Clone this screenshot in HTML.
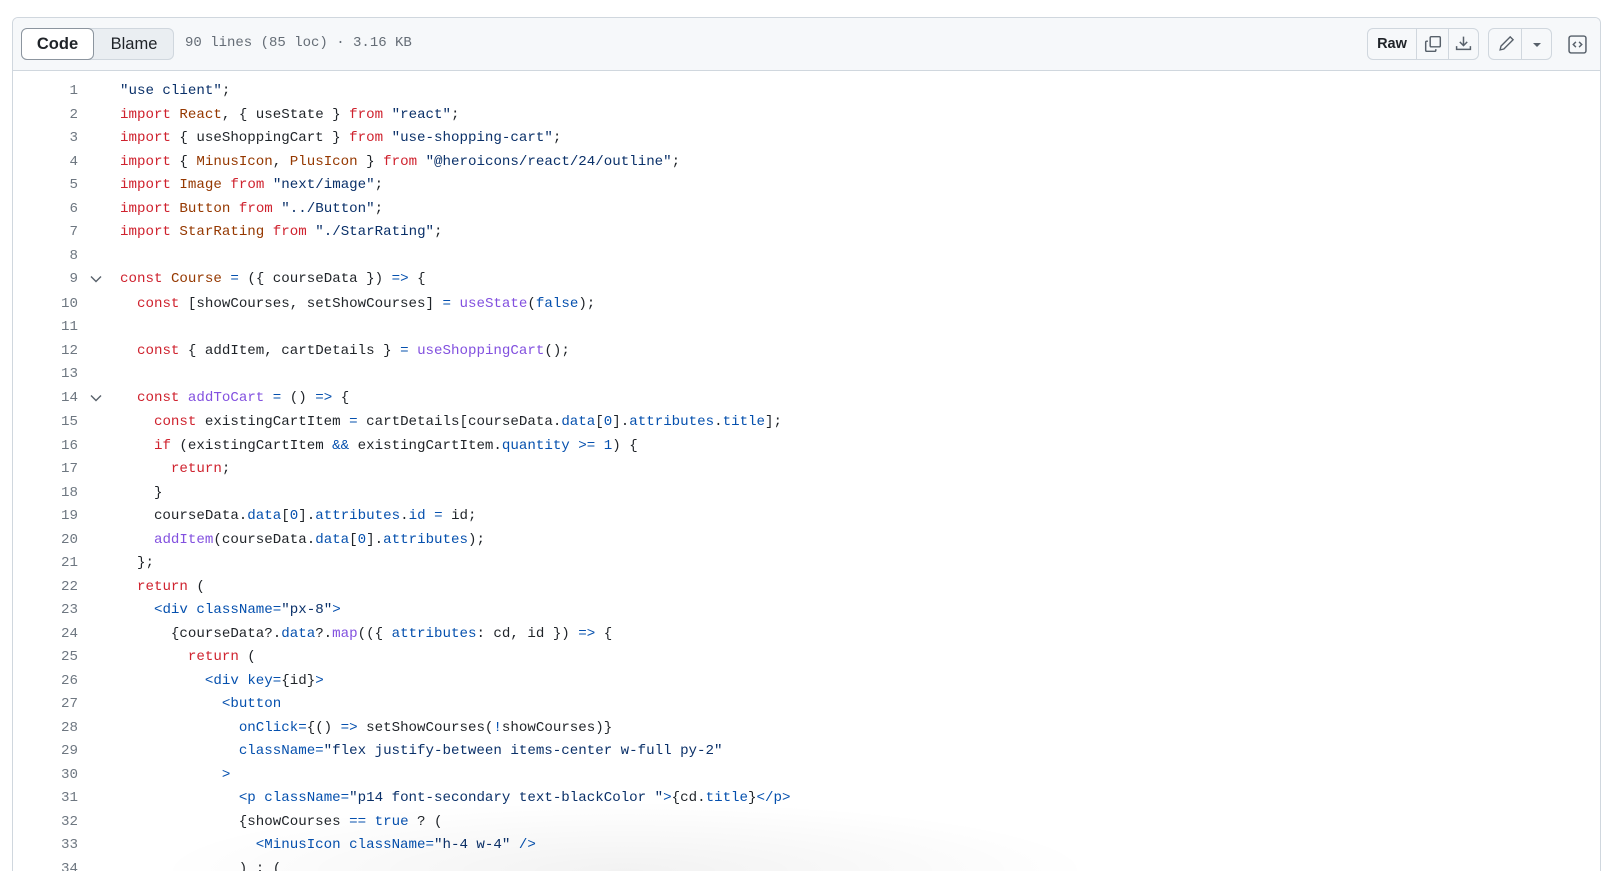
<!DOCTYPE html>
<html><head><meta charset="utf-8"><style>
html,body{margin:0;background:#fff;width:1619px;height:871px;overflow:hidden;font-family:"Liberation Sans",sans-serif;position:relative}
.box{position:absolute;left:12px;top:17px;width:1589px;height:854px;border:1px solid #d0d7de;border-bottom:none;border-radius:6px 6px 0 0;overflow:hidden;box-sizing:border-box}
.hdr{height:53px;background:#f6f8fa;border-bottom:1px solid #d0d7de;position:relative;box-sizing:border-box}
.seg{position:absolute;left:8px;top:10px;width:153px;height:32px;background:#eaeef2;border:1px solid #d0d7de;border-radius:6px;box-sizing:border-box}
.code{position:absolute;left:-1px;top:-1px;width:73px;height:32px;background:#fff;border:1px solid #8c959f;border-radius:6px;box-sizing:border-box;font-size:16.5px;font-weight:600;text-align:center;line-height:30px;color:#1f2328}
.blame{position:absolute;left:72px;top:0;width:80px;line-height:30px;text-align:center;font-size:16.5px;color:#1f2328}
.meta{position:absolute;left:172px;top:17px;font-family:"Liberation Mono",monospace;font-size:14px;color:#656d76}
.btn{position:absolute;top:10px;height:32px;border:1px solid #d0d7de;border-radius:6px;box-sizing:border-box;background:#f6f8fa}
.sep{position:absolute;top:0;width:1px;height:30px;background:#d0d7de}
pre{margin:0;position:absolute;left:0;top:80px;height:791px;overflow:hidden;font-family:"Liberation Mono",monospace;font-size:14.15px;line-height:23.5px;color:#1f2328}
.ln{display:inline-block;width:78px;text-align:right;color:#6e7781}
.fd{display:inline-block;width:42px;padding-left:12px;box-sizing:border-box;vertical-align:top}
.fd svg{margin-top:7px}
.k{color:#cf222e}.e{color:#953800}.s{color:#0a3069}.f{color:#8250df}.c{color:#0550ae}
.shadow{position:absolute;left:150px;top:800px;width:950px;height:71px;background:radial-gradient(ellipse at 50% 100%,rgba(0,0,0,.05),rgba(0,0,0,0) 70%)}
</style></head><body>
<div class="box">
<div class="hdr">
<div class="seg"><div class="code">Code</div><div class="blame">Blame</div></div>
<div class="meta">90 lines (85 loc) · 3.16 KB</div>
<div class="btn" style="left:1354px;width:112px">
<span style="position:absolute;left:0;width:48px;text-align:center;line-height:30px;font-size:14.5px;font-weight:600;color:#1f2328">Raw</span>
<div class="sep" style="left:48px"></div>
<svg style="position:absolute;left:56px;top:6px" width="18" height="18" viewBox="0 0 16 16" fill="none" stroke="#57606a" stroke-width="1.3"><rect x="5.5" y="1.5" width="9" height="9" rx="1"/><path d="M3.5 5.5H2.5a1 1 0 0 0-1 1v7a1 1 0 0 0 1 1h7a1 1 0 0 0 1-1v-1"/></svg>
<div class="sep" style="left:80px"></div>
<svg style="position:absolute;left:87px;top:6px" width="17" height="17" viewBox="0 0 16 16" fill="none" stroke="#57606a" stroke-width="1.4"><path d="M8 1.5v8M4.5 6.5 8 10l3.5-3.5M1.5 10.5v3h13v-3"/></svg>
</div>
<div class="btn" style="left:1475px;width:64px">
<svg style="position:absolute;left:9px;top:6px" width="17" height="17" viewBox="0 0 16 16" fill="none" stroke="#57606a" stroke-width="1.3"><path d="M11.5 1.8l2.7 2.7-8.7 8.7-3.5.8.8-3.5z"/></svg>
<div class="sep" style="left:32px"></div>
<svg style="position:absolute;left:43px;top:13px" width="10" height="6" viewBox="0 0 10 6"><path d="M1 1h8L5 5z" fill="#57606a"/></svg>
</div>
<svg style="position:absolute;left:1555px;top:17px" width="19" height="19" viewBox="0 0 18 18" fill="none" stroke="#57606a" stroke-width="1.4"><rect x="1" y="1" width="16" height="16" rx="2"/><path d="M7.5 6.5 5 9l2.5 2.5M10.5 6.5 13 9l-2.5 2.5"/></svg>
</div>
</div>
<pre><span class="ln">1</span><span class="fd"></span><span class="s">"use client"</span>;
<span class="ln">2</span><span class="fd"></span><span class="k">import</span> <span class="e">React</span>, { useState } <span class="k">from</span> <span class="s">"react"</span>;
<span class="ln">3</span><span class="fd"></span><span class="k">import</span> { useShoppingCart } <span class="k">from</span> <span class="s">"use-shopping-cart"</span>;
<span class="ln">4</span><span class="fd"></span><span class="k">import</span> { <span class="e">MinusIcon</span>, <span class="e">PlusIcon</span> } <span class="k">from</span> <span class="s">"@heroicons/react/24/outline"</span>;
<span class="ln">5</span><span class="fd"></span><span class="k">import</span> <span class="e">Image</span> <span class="k">from</span> <span class="s">"next/image"</span>;
<span class="ln">6</span><span class="fd"></span><span class="k">import</span> <span class="e">Button</span> <span class="k">from</span> <span class="s">"../Button"</span>;
<span class="ln">7</span><span class="fd"></span><span class="k">import</span> <span class="e">StarRating</span> <span class="k">from</span> <span class="s">"./StarRating"</span>;
<span class="ln">8</span><span class="fd"></span>
<span class="ln">9</span><span class="fd"><svg width="12" height="8" viewBox="0 0 12 8"><path d="M1 1.5 6 6.5 11 1.5" fill="none" stroke="#57606a" stroke-width="1.4"/></svg></span><span class="k">const</span> <span class="e">Course</span> <span class="c">=</span> ({ courseData }) <span class="c">=&gt;</span> {
<span class="ln">10</span><span class="fd"></span>  <span class="k">const</span> [showCourses, setShowCourses] <span class="c">=</span> <span class="f">useState</span>(<span class="c">false</span>);
<span class="ln">11</span><span class="fd"></span>
<span class="ln">12</span><span class="fd"></span>  <span class="k">const</span> { addItem, cartDetails } <span class="c">=</span> <span class="f">useShoppingCart</span>();
<span class="ln">13</span><span class="fd"></span>
<span class="ln">14</span><span class="fd"><svg width="12" height="8" viewBox="0 0 12 8"><path d="M1 1.5 6 6.5 11 1.5" fill="none" stroke="#57606a" stroke-width="1.4"/></svg></span>  <span class="k">const</span> <span class="f">addToCart</span> <span class="c">=</span> () <span class="c">=&gt;</span> {
<span class="ln">15</span><span class="fd"></span>    <span class="k">const</span> existingCartItem <span class="c">=</span> cartDetails[courseData.<span class="c">data</span>[<span class="c">0</span>].<span class="c">attributes</span>.<span class="c">title</span>];
<span class="ln">16</span><span class="fd"></span>    <span class="k">if</span> (existingCartItem <span class="c">&amp;&amp;</span> existingCartItem.<span class="c">quantity</span> <span class="c">&gt;=</span> <span class="c">1</span>) {
<span class="ln">17</span><span class="fd"></span>      <span class="k">return</span>;
<span class="ln">18</span><span class="fd"></span>    }
<span class="ln">19</span><span class="fd"></span>    courseData.<span class="c">data</span>[<span class="c">0</span>].<span class="c">attributes</span>.<span class="c">id</span> <span class="c">=</span> id;
<span class="ln">20</span><span class="fd"></span>    <span class="f">addItem</span>(courseData.<span class="c">data</span>[<span class="c">0</span>].<span class="c">attributes</span>);
<span class="ln">21</span><span class="fd"></span>  };
<span class="ln">22</span><span class="fd"></span>  <span class="k">return</span> (
<span class="ln">23</span><span class="fd"></span>    <span class="c">&lt;div</span> <span class="c">className=</span><span class="s">"px-8"</span><span class="c">&gt;</span>
<span class="ln">24</span><span class="fd"></span>      {courseData?.<span class="c">data</span>?.<span class="f">map</span>(({ <span class="c">attributes</span>: cd, id }) <span class="c">=&gt;</span> {
<span class="ln">25</span><span class="fd"></span>        <span class="k">return</span> (
<span class="ln">26</span><span class="fd"></span>          <span class="c">&lt;div</span> <span class="c">key=</span>{id}<span class="c">&gt;</span>
<span class="ln">27</span><span class="fd"></span>            <span class="c">&lt;button</span>
<span class="ln">28</span><span class="fd"></span>              <span class="c">onClick=</span>{() <span class="c">=&gt;</span> setShowCourses(<span class="c">!</span>showCourses)}
<span class="ln">29</span><span class="fd"></span>              <span class="c">className=</span><span class="s">"flex justify-between items-center w-full py-2"</span>
<span class="ln">30</span><span class="fd"></span>            <span class="c">&gt;</span>
<span class="ln">31</span><span class="fd"></span>              <span class="c">&lt;p</span> <span class="c">className=</span><span class="s">"p14 font-secondary text-blackColor "</span><span class="c">&gt;</span>{cd.<span class="c">title</span>}<span class="c">&lt;/p&gt;</span>
<span class="ln">32</span><span class="fd"></span>              {showCourses <span class="c">==</span> <span class="c">true</span> ? (
<span class="ln">33</span><span class="fd"></span>                <span class="c">&lt;MinusIcon</span> <span class="c">className=</span><span class="s">"h-4 w-4"</span> <span class="c">/&gt;</span>
<span class="ln">34</span><span class="fd"></span>              ) : (
</pre>
<div class="shadow"></div>
</body></html>
